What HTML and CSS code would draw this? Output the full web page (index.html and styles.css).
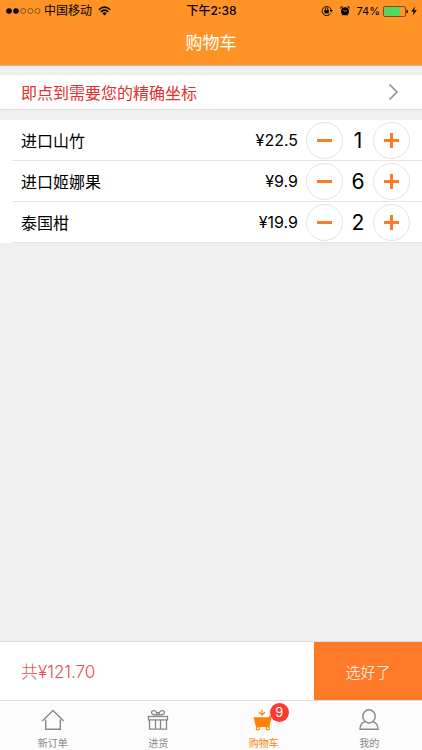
FILE: index.html
```html
<!DOCTYPE html>
<html lang="zh-CN">
<head>
    <meta charset="UTF-8">
    <meta name="viewport" content="width=device-width, initial-scale=1.0">
    <title>购物车</title>
    <link rel="stylesheet" href="styles.css">
</head>
<body>

<header class="header">
    <div class="status">
        <div class="status-left">
            <svg class="signal" width="35" height="8" viewBox="0 0 35 8">
                <circle cx="3" cy="4" r="2.8"/>
                <circle cx="10" cy="4" r="2.8"/>
                <g fill="none" stroke="#3d260b" stroke-width=".6">
                    <circle cx="17.2" cy="4" r="2.5"/>
                    <circle cx="24.4" cy="4" r="2.5"/>
                    <circle cx="31.5" cy="4" r="2.5"/>
                </g>
            </svg>
            <span>中国移动</span>
            <svg class="wifi" width="13" height="10" viewBox="0 0 13 10">
                <g fill="none" stroke="#000" stroke-width="1.5">
                    <path d="M.8 3.7Q6.5-1.5 12.2 3.7"/>
                    <path d="M2.8 5.9Q6.5 2.4 10.2 5.9"/>
                </g>
                <path d="M4.3 7.2Q6.5 5.3 8.7 7.2L6.5 9.5Z"/>
            </svg>
        </div>
        <span class="time">下午2:38</span>
        <div class="status-right">
            <svg class="lock" width="12" height="12" viewBox="0 0 12 12">
                <path d="M9.6 8.5A4.6 4.6 0 1 1 10.2 5.2" fill="none" stroke="#000" stroke-width=".9"/>
                <path d="M8.6 5H11.8L10.2 7.4Z"/>
                <rect x="3.4" y="5" width="4.4" height="3.4"/>
                <path d="M4.3 5V4a1.3 1.3 0 0 1 2.6 0V5" fill="none" stroke="#000" stroke-width=".8"/>
            </svg>
            <svg class="alarm" width="10" height="10" viewBox="0 0 10 10">
                <circle cx="5" cy="5.3" r="4"/>
                <path d="M.3 2.8A2 2 0 0 1 3 .4ZM9.7 2.8A2 2 0 0 0 7 .4ZM1.6 9.8L2.6 8.2L3.6 9ZM8.4 9.8L7.4 8.2L6.4 9Z"/>
                <path d="M3 3.9L5 5.5L7 4.2" fill="none" stroke="#ff9326" stroke-width=".8"/>
            </svg>
            <span class="percent">74%</span>
            <svg class="battery" width="26" height="11" viewBox="0 0 26 11">
                <rect x=".5" y=".5" width="22" height="10" rx="1.5" fill="none" stroke="#5d3d18" stroke-width=".8"/>
                <rect x="1.3" y="1.3" width="15.7" height="8.4" fill="#4cd964"/>
                <path d="M23.5 3.5Q25 4 25 5.5Q25 7 23.5 7.5Z"/>
            </svg>
            <svg class="bolt" width="6" height="10" viewBox="0 0 6 10">
                <path d="M3.8.5L.3 5.6H2.6L1.8 9.5L5.8 4.2H3.3Z"/>
            </svg>
        </div>
    </div>
    <h1>购物车</h1>
</header>

<main class="content">
    <a class="address" href="#">
        <span>即点到需要您的精确坐标</span>
        <svg width="11" height="18" viewBox="0 0 11 18">
            <path d="M1.5 1.5L9 9L1.5 16.5" fill="none" stroke="#8f8f8f" stroke-width="1.6"/>
        </svg>
    </a>

    <ul class="cart">
        <li class="item">
            <span class="name">进口山竹</span>
            <span class="price">¥22.5</span>
            <button class="step" aria-label="减少进口山竹"><svg width="15" height="15"><path d="M0 7.5H15"/></svg></button>
            <span class="count">1</span>
            <button class="step" aria-label="增加进口山竹"><svg width="15" height="15"><path d="M0 7.5H15M7.5 0V15"/></svg></button>
        </li>
        <li class="item">
            <span class="name">进口姬娜果</span>
            <span class="price">¥9.9</span>
            <button class="step" aria-label="减少进口姬娜果"><svg width="15" height="15"><path d="M0 7.5H15"/></svg></button>
            <span class="count">6</span>
            <button class="step" aria-label="增加进口姬娜果"><svg width="15" height="15"><path d="M0 7.5H15M7.5 0V15"/></svg></button>
        </li>
        <li class="item">
            <span class="name">泰国柑</span>
            <span class="price">¥19.9</span>
            <button class="step" aria-label="减少泰国柑"><svg width="15" height="15"><path d="M0 7.5H15"/></svg></button>
            <span class="count">2</span>
            <button class="step" aria-label="增加泰国柑"><svg width="15" height="15"><path d="M0 7.5H15M7.5 0V15"/></svg></button>
        </li>
    </ul>
</main>

<footer class="footer">
    <div class="checkout">
        <span class="total">共¥121.70</span>
        <button class="btn-done">选好了</button>
    </div>
    <nav class="tabs">
        <a class="tab" href="#">
            <svg width="24" height="22" viewBox="0 0 24 22">
                <path d="M1.3 12L12 1.5L22.7 12M4.7 10.5V20.3H19.3V10.5" fill="none" stroke="currentColor" stroke-width="1.4"/>
            </svg>
            <span>新订单</span>
        </a>
        <a class="tab" href="#">
            <svg width="24" height="22" viewBox="0 0 24 22">
                <g fill="none" stroke="currentColor" stroke-width="1.3">
                    <rect x="2.5" y="7.5" width="19" height="3.4"/>
                    <path d="M3.5 11V20.2H20.5V11M9.5 11V20M14.5 11V20"/>
                    <path d="M11 5.5C8.5 6 5.5 5.8 5.5 3.6C5.5 1 9.5.6 11 4.2M13 5.5C15.5 6 18.5 5.8 18.5 3.6C18.5 1 14.5.6 13 4.2"/>
                    <circle cx="12" cy="4.8" r="1.3"/>
                </g>
            </svg>
            <span>进货</span>
        </a>
        <a class="tab active" href="#">
            <svg width="24" height="22" viewBox="0 0 24 22">
                <path d="M1.5 8.3H16.8L17.5 6.6H20L17.3 18H4Z" fill="currentColor"/>
                <g fill="none" stroke="currentColor" stroke-width="1.2">
                    <path d="M10 .8V6M7 3.2L10 6L13 3.2"/>
                    <circle cx="5.8" cy="19.2" r="1.6" fill="#fcfcfc"/>
                    <circle cx="15.7" cy="19.2" r="1.6" fill="#fcfcfc"/>
                </g>
            </svg>
            <span>购物车</span>
            <b class="badge">9</b>
        </a>
        <a class="tab" href="#">
            <svg width="24" height="22" viewBox="0 0 24 22">
                <g fill="none" stroke="currentColor" stroke-width="1.4">
                    <ellipse cx="12" cy="7.4" rx="6.2" ry="6.6"/>
                    <path d="M8 12.6C4.5 13.8 3 16 3 20.3H21C21 16 19.5 13.8 16 12.6"/>
                </g>
            </svg>
            <span>我的</span>
        </a>
    </nav>
</footer>

</body>
</html>
```
FILE: styles.css
```css
* {
    box-sizing: border-box;
}
body {
    font-family: Inter, "Noto Sans CJK SC", sans-serif;
    background-color: #efefef;
    color: #000;
    margin: 0;
    min-height: 100vh;
    display: flex;
    flex-direction: column;
    font-size: 16px;
}
svg {
    display: block;
}
a {
    text-decoration: none;
}
button {
    font-family: inherit;
    border: none;
    padding: 0;
    cursor: pointer;
}

/* header */
.header {
    background-color: #ff9326;
    border-bottom: 1px solid #dcb38a;
}
.status {
    display: grid;
    grid-template-columns: 1fr auto 1fr;
    align-items: center;
    height: 22px;
    padding: 0 5px 0 6px;
    font-size: 12px;
    line-height: 22px;
}
.status-left, .status-right {
    display: flex;
    align-items: center;
}
.status-left {
    gap: 3px;
}
.wifi {
    margin-left: 3px;
}
.time {
    font-weight: 500;
}
.status-right {
    justify-content: flex-end;
}
.alarm {
    margin: 0 7px;
}
.percent {
    font-size: 11px;
}
.battery {
    margin: 0 2px 0 3px;
}
h1 {
    margin: 0;
    color: #fff;
    font-size: 17px;
    font-weight: 400;
    line-height: 43px;
    text-align: center;
}

/* content */
.content {
    flex: 1;
    padding-top: 9px;
}
.address {
    display: flex;
    justify-content: space-between;
    align-items: center;
    height: 35px;
    padding: 0 23px 0 21px;
    background-color: #fff;
    border-bottom: 1px solid #dedede;
    color: #e62e2e;
}
.cart {
    list-style: none;
    margin: 10px 0 0;
    padding: 0 0 0 12px;
    background-color: #fff;
}
.item {
    display: flex;
    align-items: center;
    height: 41px;
    padding: 0 12px 0 9px;
    border-bottom: 1px solid #e4e4e4;
}
.name {
    flex: 1;
}
.price {
    margin-right: 8px;
}
.step {
    display: flex;
    justify-content: center;
    align-items: center;
    width: 37px;
    height: 37px;
    background-color: #fff;
    border: 1px solid #e2e2e2;
    border-radius: 50%;
}
.step path {
    stroke: #fb7b2b;
    stroke-width: 3;
}
.count {
    width: 30px;
    font-size: 21px;
    text-align: center;
}

/* footer */
.checkout {
    display: flex;
    align-items: stretch;
    height: 59px;
    background-color: #fff;
    border-top: 1px solid #dedede;
}
.total {
    flex: 1;
    padding-left: 21px;
    color: #e25050;
    font-size: 17px;
    font-weight: 300;
    line-height: 60px;
}
.btn-done {
    width: 108px;
    background-color: #ff7a28;
    color: #fff;
    font-size: 15px;
    font-weight: 300;
}
.tabs {
    display: grid;
    grid-template-columns: repeat(4, 1fr);
    height: 50px;
    background-color: #fcfcfc;
    border-top: 1px solid #dedede;
}
.tab {
    position: relative;
    display: flex;
    flex-direction: column;
    align-items: center;
    gap: 4px;
    padding-top: 8px;
    color: #888;
    font-size: 10px;
    line-height: 16px;
}
.active {
    color: #ff8208;
}
.badge {
    position: absolute;
    top: 2px;
    left: 50%;
    width: 19px;
    height: 19px;
    margin-left: 6px;
    border-radius: 50%;
    background-color: #fb3b30;
    color: #fff;
    font-size: 13px;
    font-weight: 400;
    line-height: 19px;
    text-align: center;
}
```
